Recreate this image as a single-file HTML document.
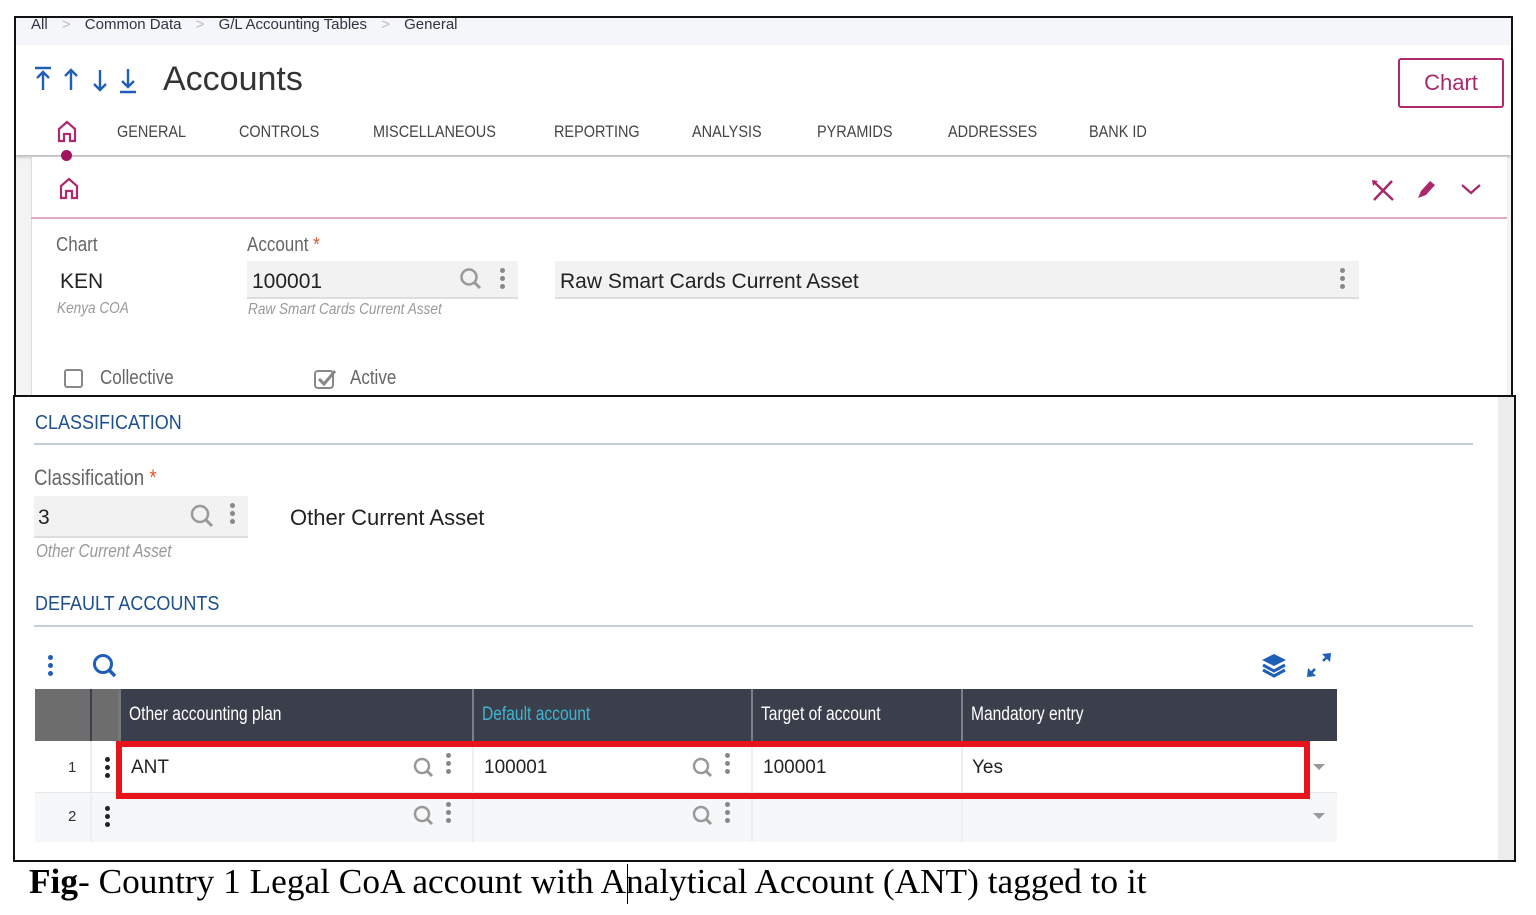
<!DOCTYPE html>
<html><head><meta charset="utf-8"><style>
*{margin:0;padding:0;box-sizing:border-box}
body{width:1536px;height:915px;background:#fff;position:relative;overflow:hidden;font-family:"Liberation Sans",sans-serif}
.a{position:absolute}
.tab{position:absolute;top:122px;font-size:17px;color:#444;transform:scaleX(.85);transform-origin:left}
.lbl{color:#666;font-size:20px;transform:scaleX(.85);transform-origin:left}
.it{font-style:italic;color:#999;font-size:16px;transform:scaleX(.85);transform-origin:left}
.mag{position:absolute}
.dots{position:absolute;width:5px}
.dots i{display:block;width:5px;height:5px;border-radius:50%;background:#888;margin-bottom:3px}
.th{position:absolute;top:704px;color:#fff;font-size:19px;transform:scaleX(.82);transform-origin:left}
</style></head><body>
<div class="a" style="left:14px;top:16px;width:1499px;height:380px;border:2px solid #111;border-bottom:none;background:#f3f3f3"></div>
<div class="a" style="left:16px;top:18px;width:1495px;height:27px;background:#f4f6fa"></div>
<div class="a" style="left:16px;top:45px;width:1495px;height:110px;background:#fff;box-shadow:0 2px 3px rgba(0,0,0,.25)"></div>
<div class="a" style="left:31px;top:157px;width:1476px;height:239px;background:#fff;border-left:1px solid #ddd"></div>
<div class="a" style="left:31px;top:217px;width:1476px;height:2px;background:#e7a7cf"></div>
<div class="a" style="left:31px;top:16px;font-size:15px;color:#334;white-space:nowrap">All <span style="color:#bbb;margin:0 10px">&gt;</span> Common Data <span style="color:#bbb;margin:0 10px">&gt;</span> G/L Accounting Tables <span style="color:#bbb;margin:0 10px">&gt;</span> General</div>
<svg class="a" style="left:33px;top:66px" width="108" height="28" viewBox="0 0 108 28"><g fill="none" stroke="#1f5fb8" stroke-width="2.4"><path d="M2 2h16M10 24V6M4 12l6-6 6 6"/><path d="M38 24V4M32 10l6-6 6 6"/><path d="M67 4v20M61 18l6 6 6-6"/><path d="M95 3v18M89 15l6 6 6-6M87 26h16"/></g></svg>
<div class="a" style="left:163px;top:60px;font-size:34px;color:#333">Accounts</div>
<div class="a" style="left:1398px;top:58px;width:106px;height:50px;border:2px solid #b0296f;border-radius:3px;color:#a8286a;font-size:22px;text-align:center;line-height:46px">Chart</div>
<svg class="a" style="left:56px;top:119px" width="22" height="24" viewBox="0 0 22 24"><path d="M3 22V10L11 3l8 7v12h-5v-7h-6v7z" fill="none" stroke="#b0296f" stroke-width="2.2"/></svg>
<div class="a" style="left:61px;top:150px;width:11px;height:11px;border-radius:50%;background:#a0145e"></div>
<svg class="a" style="left:58px;top:176px" width="22" height="24" viewBox="0 0 22 24"><path d="M3 22V10L11 3l8 7v12h-5v-7h-6v7z" fill="none" stroke="#b0296f" stroke-width="2.2"/></svg>
<div class="tab" style="left:117px">GENERAL</div>
<div class="tab" style="left:239px">CONTROLS</div>
<div class="tab" style="left:373px">MISCELLANEOUS</div>
<div class="tab" style="left:554px">REPORTING</div>
<div class="tab" style="left:692px">ANALYSIS</div>
<div class="tab" style="left:817px">PYRAMIDS</div>
<div class="tab" style="left:948px">ADDRESSES</div>
<div class="tab" style="left:1089px">BANK ID</div>
<svg class="a" style="left:1370px;top:178px" width="26" height="24"><path d="M3 3L23 22M22 3L4 22" stroke="#a8286a" stroke-width="2.5"/><path d="M2 2l6 1-5 5z" fill="#a8286a"/></svg>
<svg class="a" style="left:1414px;top:178px" width="24" height="24"><path d="M4 20l3-7 9-10 5 4-9 10z" fill="#a8286a"/></svg>
<svg class="a" style="left:1460px;top:182px" width="22" height="14"><path d="M2 3l9 8 9-8" fill="none" stroke="#a8286a" stroke-width="2.2"/></svg>
<div class="a lbl" style="left:56px;top:234px">Chart</div>
<div class="a lbl" style="left:247px;top:234px">Account <span style="color:#e4572e">*</span></div>
<div class="a" style="left:60px;top:270px;font-size:21px;color:#222">KEN</div>
<div class="a it" style="left:57px;top:300px">Kenya COA</div>
<div class="a" style="left:247px;top:261px;width:271px;height:38px;background:#f2f2f2;border-bottom:2px solid #ddd"></div>
<div class="a" style="left:252px;top:270px;font-size:21px;color:#222">100001</div>
<div class="a it" style="left:248px;top:301px">Raw Smart Cards Current Asset</div>
<div class="a" style="left:555px;top:261px;width:804px;height:38px;background:#f2f2f2;border-bottom:2px solid #ddd"></div>
<div class="a" style="left:560px;top:270px;font-size:21px;color:#222">Raw Smart Cards Current Asset</div>
<div class="dots" style="left:500px;top:268px"><i></i><i></i><i></i></div>
<div class="dots" style="left:1340px;top:268px"><i></i><i></i><i></i></div>
<svg class="mag" style="left:459px;top:267px" width="24" height="24"><circle cx="10" cy="10" r="7.5" fill="none" stroke="#999" stroke-width="2.5"/><path d="M15 15l6 6" stroke="#999" stroke-width="3"/></svg>
<div class="a" style="left:64px;top:369px;width:19px;height:19px;border:2px solid #888;border-radius:3px"></div>
<div class="a lbl" style="left:100px;top:367px">Collective</div>
<svg class="a" style="left:314px;top:368px" width="24" height="22"><rect x="1" y="3" width="18" height="17" rx="3" fill="none" stroke="#888" stroke-width="2"/><path d="M5 11l5 5 11-13" fill="none" stroke="#888" stroke-width="3"/></svg>
<div class="a lbl" style="left:350px;top:367px">Active</div>
<div class="a" style="left:13px;top:395px;width:1503px;height:467px;border:2px solid #111;background:#fff"></div>
<div class="a" style="left:1498px;top:397px;width:16px;height:463px;background:#ededed"></div>
<div class="a" style="left:35px;top:412px;font-size:20px;color:#1e4f8f;transform:scaleX(.9);transform-origin:left">CLASSIFICATION</div>
<div class="a" style="left:34px;top:443px;width:1439px;height:2px;background:#c3cfdc"></div>
<div class="a lbl" style="left:34px;top:465px;font-size:22px">Classification <span style="color:#e4572e">*</span></div>
<div class="a" style="left:34px;top:496px;width:214px;height:42px;background:#f2f2f2;border-bottom:2px solid #ddd"></div>
<div class="a" style="left:38px;top:506px;font-size:21px;color:#222">3</div>
<svg class="mag" style="left:189px;top:503px" width="26" height="26"><circle cx="11" cy="11" r="8" fill="none" stroke="#999" stroke-width="2.5"/><path d="M17 17l6 6" stroke="#999" stroke-width="3"/></svg>
<div class="dots" style="left:230px;top:503px"><i></i><i></i><i></i></div>
<div class="a it" style="left:36px;top:541px;font-size:18px">Other Current Asset</div>
<div class="a" style="left:290px;top:505px;font-size:22px;color:#222">Other Current Asset</div>
<div class="a" style="left:35px;top:593px;font-size:20px;color:#1e4f8f;transform:scaleX(.9);transform-origin:left">DEFAULT ACCOUNTS</div>
<div class="a" style="left:34px;top:625px;width:1439px;height:2px;background:#c3cfdc"></div>
<div class="dots" style="left:48px;top:655px"><i style="background:#1f5fb8"></i><i style="background:#1f5fb8"></i><i style="background:#1f5fb8"></i></div>
<svg class="mag" style="left:91px;top:652px" width="28" height="28"><circle cx="12" cy="12" r="8.5" fill="none" stroke="#1f5fb8" stroke-width="3"/><path d="M18 18l6 6" stroke="#1f5fb8" stroke-width="3.5"/></svg>
<svg class="a" style="left:1260px;top:652px" width="28" height="26"><path d="M14 2l12 6-12 6-12-6z" fill="#1f5fb8"/><path d="M3 13l11 6 11-6M3 18l11 6 11-6" fill="none" stroke="#1f5fb8" stroke-width="3"/></svg>
<svg class="a" style="left:1305px;top:651px" width="28" height="28"><path d="M26 2l-9 1 8 8zM2 26l1-9 8 8z" fill="#1f5fb8"/><path d="M24 4l-6 6M4 24l6-6" stroke="#1f5fb8" stroke-width="2.5"/></svg>
<div class="a" style="left:35px;top:689px;width:1302px;height:52px;background:#3a3f4b"></div>
<div class="a" style="left:35px;top:689px;width:55px;height:52px;background:#6d6d6d"></div>
<div class="a" style="left:92px;top:689px;width:26px;height:52px;background:#6d6d6d"></div>
<div class="a" style="left:118px;top:689px;width:3px;height:153px;background:#777"></div>
<div class="a" style="left:472px;top:689px;width:2px;height:52px;background:#7a7f88"></div>
<div class="a" style="left:751px;top:689px;width:2px;height:52px;background:#7a7f88"></div>
<div class="a" style="left:961px;top:689px;width:2px;height:52px;background:#7a7f88"></div>
<div class="th" style="left:129px">Other accounting plan</div>
<div class="th" style="left:482px;color:#40b4d0">Default account</div>
<div class="th" style="left:761px">Target of account</div>
<div class="th" style="left:971px">Mandatory entry</div>
<div class="a" style="left:35px;top:741px;width:1302px;height:52px;background:#fff;border-bottom:1px solid #e6e6e6"></div>
<div class="a" style="left:35px;top:793px;width:1302px;height:49px;background:#f6f7f9"></div>
<div class="a" style="left:90px;top:741px;width:2px;height:101px;background:#eee"></div>
<div class="a" style="left:472px;top:741px;width:2px;height:101px;background:#eee"></div>
<div class="a" style="left:751px;top:741px;width:2px;height:101px;background:#eee"></div>
<div class="a" style="left:961px;top:741px;width:2px;height:101px;background:#eee"></div>
<div class="a" style="left:68px;top:759px;font-size:15px;color:#333">1</div>
<div class="a" style="left:68px;top:808px;font-size:15px;color:#333">2</div>
<div class="dots" style="left:105px;top:757px"><i style="background:#222"></i><i style="background:#222"></i><i style="background:#222"></i></div>
<div class="dots" style="left:105px;top:806px"><i style="background:#222"></i><i style="background:#222"></i><i style="background:#222"></i></div>
<div class="a" style="left:131px;top:757px;font-size:19px;color:#222">ANT</div>
<div class="a" style="left:484px;top:757px;font-size:19px;color:#222">100001</div>
<div class="a" style="left:763px;top:757px;font-size:19px;color:#222">100001</div>
<div class="a" style="left:972px;top:757px;font-size:19px;color:#222">Yes</div>
<svg class="mag" style="left:412px;top:756px" width="24" height="24"><circle cx="10" cy="10" r="7" fill="none" stroke="#999" stroke-width="2.5"/><path d="M15 15l5 5" stroke="#999" stroke-width="3"/></svg>
<svg class="mag" style="left:691px;top:756px" width="24" height="24"><circle cx="10" cy="10" r="7" fill="none" stroke="#999" stroke-width="2.5"/><path d="M15 15l5 5" stroke="#999" stroke-width="3"/></svg>
<svg class="mag" style="left:412px;top:804px" width="24" height="24"><circle cx="10" cy="10" r="7" fill="none" stroke="#999" stroke-width="2.5"/><path d="M15 15l5 5" stroke="#999" stroke-width="3"/></svg>
<svg class="mag" style="left:691px;top:804px" width="24" height="24"><circle cx="10" cy="10" r="7" fill="none" stroke="#999" stroke-width="2.5"/><path d="M15 15l5 5" stroke="#999" stroke-width="3"/></svg>
<div class="dots" style="left:446px;top:753px"><i></i><i></i><i></i></div>
<div class="dots" style="left:725px;top:753px"><i></i><i></i><i></i></div>
<div class="dots" style="left:446px;top:802px"><i></i><i></i><i></i></div>
<div class="dots" style="left:725px;top:802px"><i></i><i></i><i></i></div>
<svg class="a" style="left:1312px;top:763px" width="14" height="8"><path d="M1 1h12L7 7z" fill="#999"/></svg>
<svg class="a" style="left:1312px;top:812px" width="14" height="8"><path d="M1 1h12L7 7z" fill="#999"/></svg>
<div class="a" style="left:116px;top:741px;width:1194px;height:58px;border:6px solid #e8141c"></div>
<div class="a" style="left:29px;top:862px;font-family:'Liberation Serif',serif;font-size:35.3px;color:#000;white-space:nowrap"><b>Fig</b>- Country 1 Legal CoA account with Analytical Account (ANT) tagged to it</div>
<div class="a" style="left:627px;top:864px;width:1px;height:40px;background:#000"></div>
</body></html>
